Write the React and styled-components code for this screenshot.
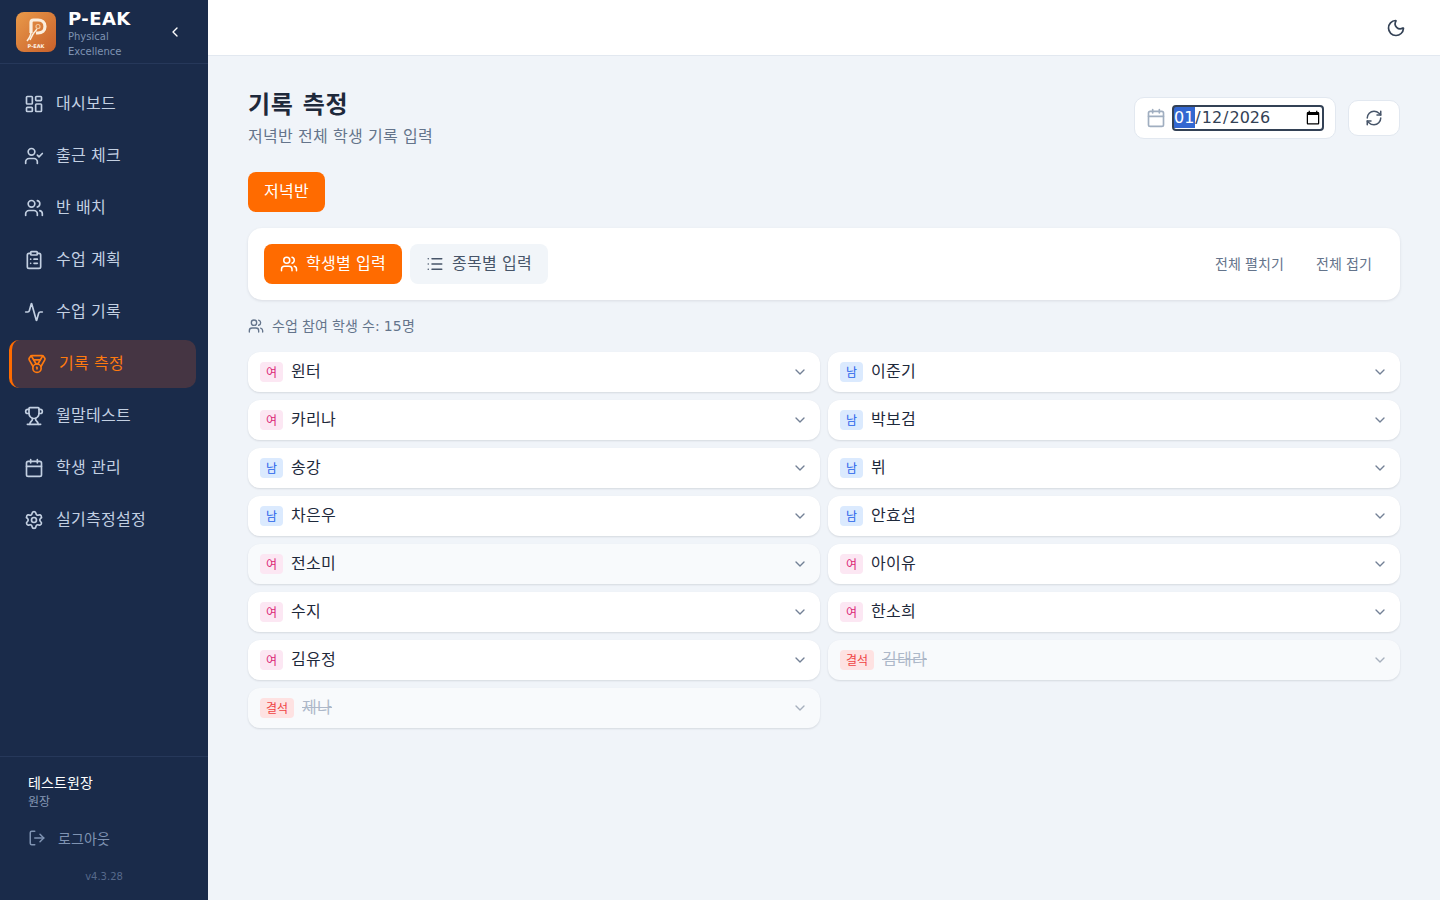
import React from 'react';
import styled, { css, createGlobalStyle } from 'styled-components';
import { LayoutDashboard, UserCheck, Users, ClipboardList, Activity, Medal, Trophy, Calendar, Settings, LogOut, Moon, RefreshCw, List, ChevronDown, ChevronLeft } from 'lucide-react';

const Global = createGlobalStyle`
  * { box-sizing: border-box; }
  html, body { margin: 0; padding: 0; height: 100%; }
  body { font-family: "DejaVu Sans", "Noto Sans CJK KR", sans-serif; background: #f0f4f9; color: #1e293b; }
`;

const text16 = css`font-size: 16px; letter-spacing: .28px; word-spacing: -.37px;`;
const text14 = css`font-size: 14px; letter-spacing: .12px; word-spacing: -.57px;`;
const text12 = css`font-size: 12px; letter-spacing: -.04px;`;

const Shell = styled.div`display: flex; height: 100vh; overflow: hidden;`;
const Sidebar = styled.aside`width: 208px; flex: none; background: #1a2b4a; display: flex; flex-direction: column;`;
const Brand = styled.div`height: 64px; flex: none; display: flex; align-items: center; padding: 0 16px; border-bottom: 1px solid #26385a;`;
const LogoBox = styled.div`width: 40px; height: 40px; flex: none; margin-right: 12px; border-radius: 8px; overflow: hidden;`;
const BrandText = styled.div`width: 82px; padding-top: 4px; display: flex; flex-direction: column;`;
const BrandName = styled.div`font-size: 18px; font-weight: 700; letter-spacing: .45px; line-height: 20px; color: #fff; white-space: nowrap;`;
const BrandSub = styled.div`font-size: 10px; line-height: 15px; color: #7f93b2; width: 60px;`;
const Collapse = styled.button`border: 0; background: none; padding: 0; color: #fff; width: 16px; height: 16px; margin-left: 17px; display: flex; align-items: center; justify-content: center;`;
const Nav = styled.nav`flex: 1; display: flex; flex-direction: column; gap: 4px; padding: 16px 12px 0 9px;`;
const NavItem = styled.a`
  height: 48px; display: flex; align-items: center; gap: 12px; padding-left: 15px; border-radius: 10px;
  ${text16} color: ${p => p.$active ? '#ff7a0f' : '#c3d0e2'};
  background: ${p => p.$active ? '#453543' : 'transparent'};
  border-left: ${p => p.$active ? '3px solid #ff6b00' : '0'};
  svg { flex: none; }
`;
const Lifted = styled.span`display: block; padding-bottom: ${p => p.$by || 4}px;`;
const SideFoot = styled.div`flex: none; height: 144px; border-top: 1px solid #26385a; padding: 17px 28px 0; display: flex; flex-direction: column;`;
const UserName = styled.div`${text14} line-height: 19px; color: #fff;`;
const UserRole = styled.div`${text12} line-height: 18px; color: #8698b5;`;
const Logout = styled.a`display: flex; align-items: center; gap: 12px; margin-top: 17px; height: 20px; ${text14} color: #7f93b2;`;
const Version = styled.div`margin: 21px -28px 0; text-align: center; font-size: 10px; line-height: 16px; color: #56698a;`;

const Column = styled.div`flex: 1; min-width: 0; display: flex; flex-direction: column;`;
const TopBar = styled.header`height: 56px; flex: none; background: #fff; border-bottom: 1px solid #e2e8f0; display: flex; align-items: center; justify-content: flex-end; padding: 0 34px; color: #334155;`;
const Content = styled.main`flex: 1; padding: 32px 40px;`;
const PageHead = styled.div`display: flex; justify-content: space-between; align-items: flex-start;`;
const Title = styled.h1`margin: 1px 0 0; font-size: 24px; letter-spacing: .75px; line-height: 32px; font-weight: 700; color: #1e293b;`;
const Subtitle = styled.p`margin: 6px 0 0; ${text16} line-height: 20px; color: #64748b;`;
const Tools = styled.div`display: flex; align-items: center; gap: 12px; margin-top: 9px;`;
const DateBox = styled.div`width: 202px; height: 42px; background: #fff; border: 1px solid #e2e8f0; border-radius: 10px; display: flex; align-items: center; padding: 0 11px 1px; gap: 7px; color: #a0aec0;`;
const DateInput = styled.input`width: 150px; height: 24px; border: 0; padding: 0; background: transparent; font-family: inherit; font-size: 16px; color: #334155; outline: auto;`;
const IconBtn = styled.button`width: 52px; height: 36px; background: #fff; border: 1px solid #e2e8f0; border-radius: 10px; padding: 0; display: flex; align-items: center; justify-content: center; color: #475569;`;
const ClassBtn = styled.button`display: block; margin-top: 25px; height: 40px; width: 77px; padding: 0; border: 0; border-radius: 8px; background: #ff6b00; color: #fff; font: inherit; ${text16}`;
const Card = styled.section`margin-top: 16px; height: 72px; background: #fff; border-radius: 14px; box-shadow: 0 1px 3px rgba(15,23,42,.1); display: flex; align-items: center; justify-content: space-between; padding: 0 12px 0 16px;`;
const Tabs = styled.div`display: flex; gap: 8px;`;
const Tab = styled.button`
  width: 138px; height: 40px; border: 0; border-radius: 8px; padding: 0; display: flex; align-items: center; justify-content: center; gap: 8px;
  font: inherit; ${text16}
  background: ${p => p.$on ? '#ff6b00' : '#f1f5f9'}; color: ${p => p.$on ? '#fff' : '#475569'};
`;
const Links = styled.div`display: flex;`;
const LinkBtn = styled.button`border: 0; background: none; padding: 0 16px; font: inherit; ${text14} color: #64748b;`;
const Count = styled.div`display: flex; align-items: center; gap: 8px; margin-top: 16px; height: 20px; ${text14} color: #64748b;`;
const Grid = styled.div`margin-top: 16px; display: grid; grid-template-columns: 1fr 1fr; gap: 8px;`;
const Row = styled.div`
  height: 40px; border-radius: 12px; display: flex; align-items: center; padding: 0 12px;
  background: ${p => p.$soft ? '#f8fafc' : '#fff'};
  box-shadow: 0 1px 2px rgba(15,23,42,.12);
  color: ${p => p.$absent ? '#94a3b8' : '#1e293b'};
`;
const Badge = styled.span`
  height: 20px; padding: 0 6px 1px; border-radius: 4px; display: flex; align-items: center; justify-content: center; ${text12} margin-right: 8px;
  background: ${p => p.$kind === 'm' ? '#dbeafe' : p.$kind === 'f' ? '#fce7f3' : '#fee2e2'};
  color: ${p => p.$kind === 'm' ? '#2563eb' : p.$kind === 'f' ? '#db2777' : '#ef4444'};
`;
const Name = styled.span`flex: 1; padding-bottom: 4px; ${text16} opacity: ${p => p.$absent ? .75 : 1}; text-decoration: ${p => p.$absent ? 'line-through' : 'none'};`;
const Chevron = styled(ChevronDown)`color: #64748b; opacity: ${p => p.$absent ? .55 : .9};`;

const nav = [
  [LayoutDashboard, '대시보드'], [UserCheck, '출근 체크'], [Users, '반 배치'], [ClipboardList, '수업 계획'],
  [Activity, '수업 기록'], [Medal, '기록 측정', true], [Trophy, '월말테스트'], [Calendar, '학생 관리'], [Settings, '실기측정설정'],
];
const students = [
  ['f', '윈터'], ['m', '이준기'], ['f', '카리나'], ['m', '박보검'], ['m', '송강'], ['m', '뷔'], ['m', '차은우'], ['m', '안효섭'],
  ['f', '전소미', true], ['f', '아이유'], ['f', '수지'], ['f', '한소희'], ['f', '김유정'], ['a', '김태라'], ['a', '제나'],
];
const label = { f: '여', m: '남', a: '결석' };

function Logo() {
  return (
    <svg width="40" height="40" viewBox="0 0 40 40">
      <defs>
        <linearGradient id="lg" x1="0" y1="0" x2="1" y2="1">
          <stop offset="0" stopColor="#e99a4a" />
          <stop offset="1" stopColor="#c9602a" />
        </linearGradient>
      </defs>
      <rect width="40" height="40" fill="url(#lg)" />
      <path d="M15 21V10.500c0-1.500 1-2.500 2.500-2.500H22c4 0 7 2.500 7 6.500S26 21 22 21h-2" fill="none" stroke="#fbeedd" strokeWidth="3.200" />
      <path d="M15 20c0 3-1.500 6-4 9" fill="none" stroke="#fbeedd" strokeWidth="1.600" />
      <path d="M14 28c2-5 4-8 7-11" fill="none" stroke="#fbeedd" strokeWidth="1.500" />
      <circle cx="22" cy="14.500" r="2" fill="none" stroke="#f3c79b" strokeWidth="1.200" />
      <text x="20" y="35.500" textAnchor="middle" fontSize="5" fontWeight="700" fill="#fdf2e4" fontFamily="DejaVu Sans">P-EAK</text>
    </svg>
  );
}

export default function App() {
  const dateRef = React.useRef(null);
  React.useEffect(() => { dateRef.current && dateRef.current.focus(); }, []);
  return (
    <Shell>
      <Global />
      <Sidebar>
        <Brand>
          <LogoBox><Logo /></LogoBox>
          <BrandText>
            <BrandName>P-EAK</BrandName>
            <BrandSub>Physical Excellence</BrandSub>
          </BrandText>
          <Collapse><ChevronLeft size={16} strokeWidth={2} /></Collapse>
        </Brand>
        <Nav>
          {nav.map(([I, t, a]) => (
            <NavItem key={t} $active={a}><I size={20} strokeWidth={2} /><Lifted>{t}</Lifted></NavItem>
          ))}
        </Nav>
        <SideFoot>
          <UserName>테스트원장</UserName>
          <UserRole>원장</UserRole>
          <Logout><LogOut size={18} strokeWidth={2} /><Lifted $by={1}>로그아웃</Lifted></Logout>
          <Version>v4.3.28</Version>
        </SideFoot>
      </Sidebar>
      <Column>
        <TopBar><Moon size={20} strokeWidth={2} /></TopBar>
        <Content>
          <PageHead>
            <div>
              <Title>기록 측정</Title>
              <Subtitle>저녁반 전체 학생 기록 입력</Subtitle>
            </div>
            <Tools>
              <DateBox>
                <Calendar size={20} strokeWidth={2} />
                <DateInput ref={dateRef} type="date" defaultValue="2026-01-12" />
              </DateBox>
              <IconBtn><RefreshCw size={18} strokeWidth={2} /></IconBtn>
            </Tools>
          </PageHead>
          <ClassBtn><Lifted>저녁반</Lifted></ClassBtn>
          <Card>
            <Tabs>
              <Tab $on><Users size={18} strokeWidth={2} /><Lifted>학생별 입력</Lifted></Tab>
              <Tab><List size={18} strokeWidth={2} /><Lifted>종목별 입력</Lifted></Tab>
            </Tabs>
            <Links>
              <LinkBtn><Lifted $by={2}>전체 펼치기</Lifted></LinkBtn>
              <LinkBtn><Lifted $by={2}>전체 접기</Lifted></LinkBtn>
            </Links>
          </Card>
          <Count><Users size={16} strokeWidth={2} /><Lifted $by={2}>수업 참여 학생 수: 15명</Lifted></Count>
          <Grid>
            {students.map(([k, n, soft]) => (
              <Row key={n} $absent={k === 'a'} $soft={soft || k === 'a'}>
                <Badge $kind={k}>{label[k]}</Badge>
                <Name $absent={k === 'a'}>{n}</Name>
                <Chevron size={16} $absent={k === 'a'} />
              </Row>
            ))}
          </Grid>
        </Content>
      </Column>
    </Shell>
  );
}
